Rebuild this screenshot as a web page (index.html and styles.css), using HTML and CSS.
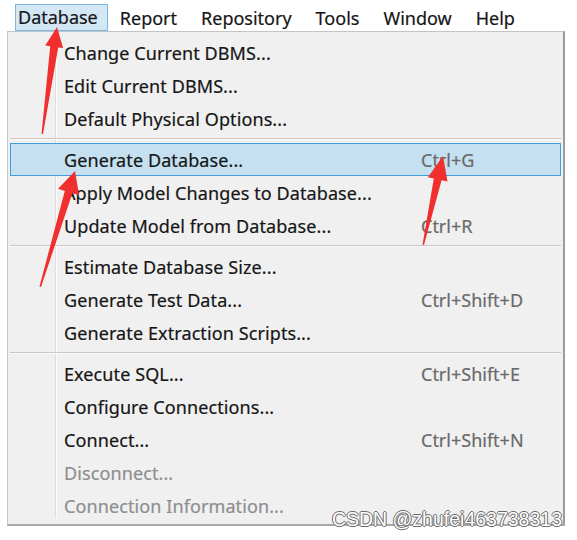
FILE: index.html
```html
<!DOCTYPE html>
<html>
<head>
<meta charset="utf-8">
<link rel="stylesheet" href="styles.css">
</head>
<body>
<div class="screen">
  <div class="menubar">
    <span class="top-item first active">Database</span>
    <span class="top-item">Report</span>
    <span class="top-item">Repository</span>
    <span class="top-item">Tools</span>
    <span class="top-item">Window</span>
    <span class="top-item">Help</span>
  </div>
  <div class="dropdown">
    <div class="row"><span>Change Current DBMS...</span><span class="key"></span></div>
    <div class="row"><span>Edit Current DBMS...</span><span class="key"></span></div>
    <div class="row"><span>Default Physical Options...</span><span class="key"></span></div>
    <div class="sep"></div>
    <div class="row hot"><span>Generate Database...</span><span class="key">Ctrl+G</span></div>
    <div class="row"><span>Apply Model Changes to Database...</span><span class="key"></span></div>
    <div class="row"><span>Update Model from Database...</span><span class="key">Ctrl+R</span></div>
    <div class="sep"></div>
    <div class="row"><span>Estimate Database Size...</span><span class="key"></span></div>
    <div class="row"><span>Generate Test Data...</span><span class="key">Ctrl+Shift+D</span></div>
    <div class="row"><span>Generate Extraction Scripts...</span><span class="key"></span></div>
    <div class="sep"></div>
    <div class="row"><span>Execute SQL...</span><span class="key">Ctrl+Shift+E</span></div>
    <div class="row"><span>Configure Connections...</span><span class="key"></span></div>
    <div class="row"><span>Connect...</span><span class="key">Ctrl+Shift+N</span></div>
    <div class="row disabled"><span>Disconnect...</span><span class="key"></span></div>
    <div class="row disabled"><span>Connection Information...</span><span class="key"></span></div>
  </div>

  <svg class="arrows" width="577" height="540" viewBox="0 0 577 540">
    <polygon fill="#f22f2f" points="57,27 63.1,48.1 58.2,47.4 43,134 41.5,134 50.2,46.2 45.3,45.5"/>
    <polygon fill="#f22f2f" points="75,171 79.1,195.2 72.4,193.2 41,287 39.5,286.5 64.8,190.9 58.1,188.8"/>
    <polygon fill="#f22f2f" points="443,156 447.5,181.6 441.6,180.3 424,245 422.5,244.7 433.8,178.5 427.9,177.2"/>
  </svg>

  <div class="watermark">CSDN @zhufei463738313</div>
</div>
</body>
</html>
```

FILE: styles.css
```css
html, body {
  margin: 0;
  padding: 0;
  background: #ffffff;
}

.screen {
  position: relative;
  width: 577px;
  height: 540px;
  overflow: hidden;
  font-family: "Noto Sans", "Open Sans", sans-serif;
  font-size: 18px;
  color: #161616;
  -webkit-text-stroke: 0.2px currentColor;
}

.menubar {
  display: flex;
  align-items: stretch;
  height: 27px;
  padding-top: 4px;
  padding-left: 15px;
}

.top-item {
  display: flex;
  align-items: center;
  padding: 0 11px;
  line-height: 25px;
  border: 1px solid transparent;
  border-bottom: 0;
}

.top-item.first {
  padding-left: 2px;
  padding-right: 9px;
}

.top-item.active {
  background: #d3e7f5;
  border-color: #7cb6e2;
  border-bottom: 1px solid #7cb6e2;
}

.dropdown {
  margin-left: 7px;
  width: 555px;
  border-top: 1px solid #c4c4c4;
  border-left: 1px solid #c8c8c8;
  border-right: 2px solid #9c9c9c;
  border-bottom: 2px solid #a8a8a8;
  padding: 4px 0 2px 0;
  background:
    linear-gradient(to right, transparent 47px, #dedede 47px, #dedede 48px, #fbfbfb 48px, #fbfbfb 49px, transparent 49px) no-repeat 0 0 / 100% calc(100% - 6px),
    #f0f0f0;
}

.row {
  display: grid;
  grid-template-columns: 1fr 142px;
  align-items: center;
  height: 33px;
  padding-left: 56px;
  box-sizing: border-box;
  white-space: nowrap;
  letter-spacing: 0.1px;
}

.row.hot {
  background: #c4e0f1;
  border: 1px solid #3f9ddc;
  margin: 0 2px;
  padding-left: 53px;
  grid-template-columns: 1fr 139px;
}

.key {
  color: #6a6a6a;
  letter-spacing: 0;
}

.row.disabled {
  color: #8e8e8e;
}

.sep {
  height: 8px;
  margin: 0 2px;
  background: linear-gradient(#c8c8c8, #c8c8c8) no-repeat 0 3px / 100% 1px,
              linear-gradient(#fafafa, #fafafa) no-repeat 0 4px / 100% 1px;
}

.arrows {
  position: absolute;
  left: 0;
  top: 0;
  pointer-events: none;
}

.watermark {
  position: absolute;
  right: 15px;
  top: 508px;
  font-family: "Liberation Sans", Arial, sans-serif;
  font-size: 19.5px;
  color: #ffffff;
  -webkit-text-stroke: 0;
  text-shadow: 1px 0 0 #6a6a6a, -1px 0 0 #6a6a6a, 0 1px 0 #6a6a6a, 0 -1px 0 #6a6a6a;
  white-space: nowrap;
}
```
